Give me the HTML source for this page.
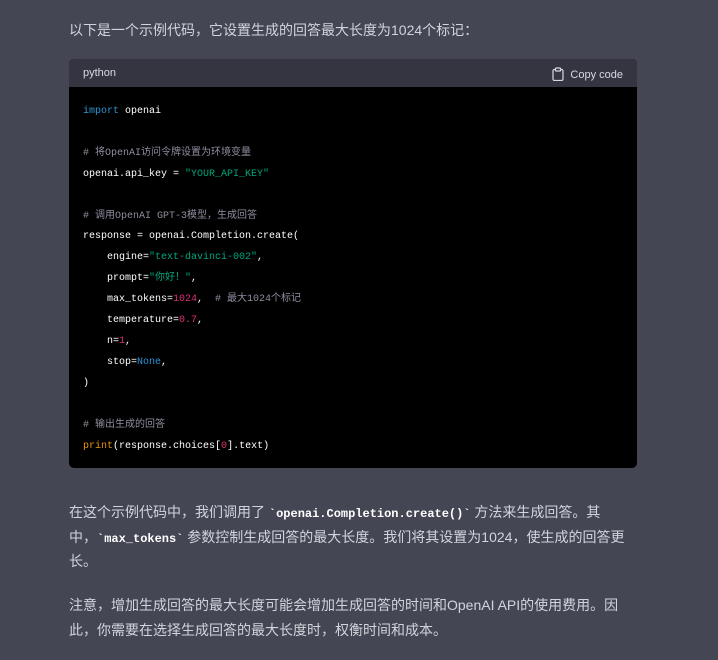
<!DOCTYPE html>
<html><head><meta charset="utf-8"><style>
html,body{margin:0;padding:0;background:#444654;width:718px;height:660px;overflow:hidden}
body{font-family:"Liberation Sans","Noto Sans CJK SC",sans-serif;color:#d1d5db;font-size:14px}
.p{position:absolute;left:69px;width:556px;line-height:24.5px}
.cb{position:absolute;left:69px;top:59px;width:568px;height:409px;background:#000;border-radius:5px;overflow:hidden}
.hd{height:28px;background:#343541;color:#d9d9e3;font-size:11px;position:relative}
.hd .l{position:absolute;left:14px;top:8px}
.hd .r{position:absolute;right:14px;top:8px}
pre{margin:0;position:absolute;left:14px;top:43px;font-family:"Liberation Mono","Noto Sans CJK SC",monospace;font-size:10px;line-height:20.9px;color:#fff}
.k{color:#2e95d3}.s{color:#00a67d}.c{color:#8e8ea0}.n{color:#df3079}.f{color:#e9950c}
code{font-family:"Liberation Mono",monospace;font-weight:bold;font-size:12px;line-height:10px;color:#fff}
</style></head><body>
<div class="p" style="top:18px;width:600px">以下是一个示例代码，它设置生成的回答最大长度为1024个标记：</div>
<div class="cb">
<div class="hd"><span class="l">python</span><span class="r"><svg width="12" height="14" viewBox="0 0 12 14" style="vertical-align:-3px;margin-right:6px"><rect x="1" y="2.5" width="10" height="11" rx="1.5" fill="none" stroke="#d9d9e3" stroke-width="1.2"/><rect x="3.5" y="1" width="5" height="3" rx="0.8" fill="#343541" stroke="#d9d9e3" stroke-width="1.2"/></svg>Copy code</span></div>
<pre><span class="k">import</span> openai

<span class="c"># 将OpenAI访问令牌设置为环境变量</span>
openai.api_key = <span class="s">"YOUR_API_KEY"</span>

<span class="c"># 调用OpenAI GPT-3模型，生成回答</span>
response = openai.Completion.create(
    engine=<span class="s">"text-davinci-002"</span>,
    prompt=<span class="s">"你好！"</span>,
    max_tokens=<span class="n">1024</span>,  <span class="c"># 最大1024个标记</span>
    temperature=<span class="n">0.7</span>,
    n=<span class="n">1</span>,
    stop=<span class="k">None</span>,
)

<span class="c"># 输出生成的回答</span>
<span class="f">print</span>(response.choices[<span class="n">0</span>].text)</pre>
</div>
<div class="p" style="top:500px;width:557px">在这个示例代码中，我们调用了 <code>`openai.Completion.create()`</code> 方法来生成回答。其中，<code>`max_tokens`</code> 参数控制生成回答的最大长度。我们将其设置为1024，使生成的回答更长。</div>
<div class="p" style="top:593px">注意，增加生成回答的最大长度可能会增加生成回答的时间和OpenAI API的使用费用。因此，你需要在选择生成回答的最大长度时，权衡时间和成本。</div>
</body></html>
